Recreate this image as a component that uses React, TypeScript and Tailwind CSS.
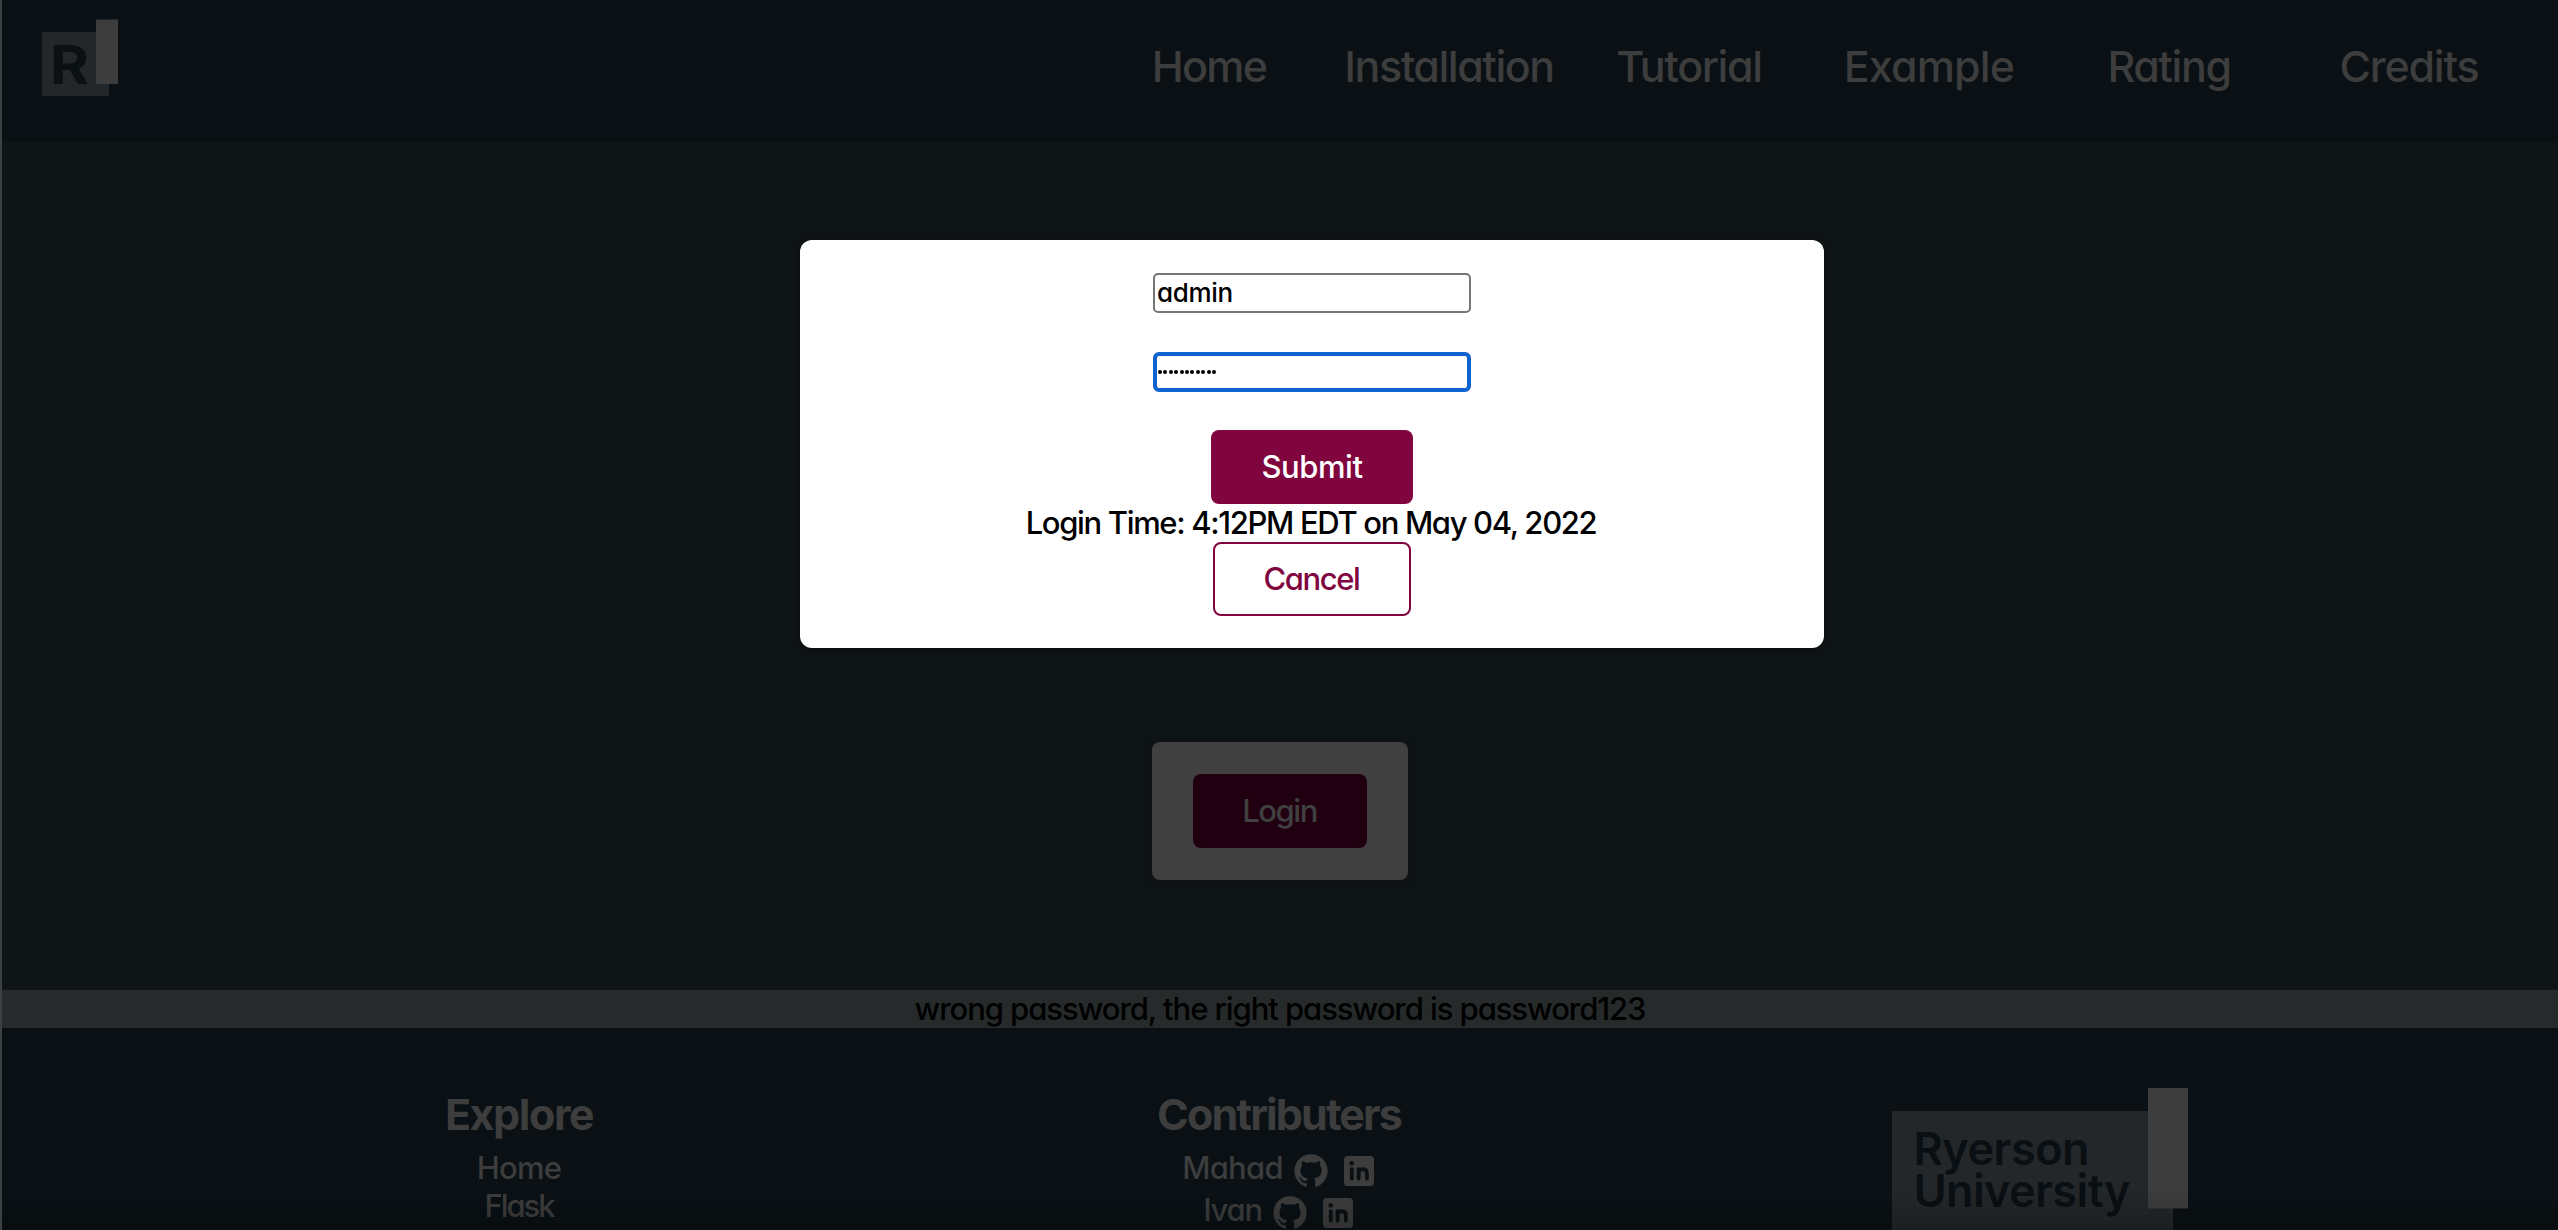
import { BiLogoGithub } from "react-icons/bi";

const navItems = [
  { label: "Home", tracking: "tracking-[-1.73px]" },
  { label: "Installation", tracking: "tracking-[-1.48px]" },
  { label: "Tutorial", tracking: "tracking-[-1.37px]" },
  { label: "Example", tracking: "tracking-[-0.86px]" },
  { label: "Rating", tracking: "tracking-[-1.44px]" },
  { label: "Credits", tracking: "tracking-[-1.21px]" },
];

const contributors = [
  { name: "Mahad", tracking: "tracking-[-0.75px]" },
  { name: "Ivan", tracking: "tracking-[-1.3px]" },
];

const passwordDots = Array.from({ length: 11 }, (_, i) => i);

function HeaderLogo() {
  return (
    <svg className="mt-[19px] ml-10 h-[78px] w-[76px]" viewBox="0 0 76 78">
      <rect x="0" y="13" width="67" height="64" fill="#23272a" />
      <rect x="54" y="0.5" width="22" height="64.5" fill="#3c3d3c" />
      <text
        x="8"
        y="64.5"
        fontSize="54"
        fontWeight="700"
        fill="#0a1014"
        textLength="39"
        lengthAdjust="spacingAndGlyphs"
      >
        R
      </text>
    </svg>
  );
}

function UniversityLogo() {
  return (
    <svg className="h-[150px] w-[296px]" viewBox="0 0 296 150">
      <rect x="0" y="23" width="281" height="127" fill="#23272a" />
      <rect x="256" y="0" width="40" height="120.5" fill="#3c3d3c" />
      <g fontSize="45" fontWeight="600" fill="#0a0f13">
        <text x="21.5" y="76.5" letterSpacing="-0.5">Ryerson</text>
        <text x="21.5" y="119" letterSpacing="-0.6">University</text>
      </g>
    </svg>
  );
}

function LinkedinIcon() {
  return (
    <svg className="mt-[7px] ml-[5px] size-[30px]" viewBox="0 0 30 30">
      <rect width="30" height="30" rx="3.5" fill="currentColor" />
      <circle cx="7.8" cy="7.2" r="2.3" fill="#0a1014" />
      <g fill="none" stroke="#0a1014" strokeWidth="3.8" strokeLinecap="round">
        <path d="M7.8 13.2V22.6" />
        <path d="M14.6 13.2V22.6" />
        <path d="M14.6 17.4C14.6 14.6 16.4 13.2 18.8 13.2C21.4 13.2 22.9 14.7 22.9 17.6V22.6" />
      </g>
    </svg>
  );
}

function Header() {
  return (
    <header className="flex h-[142px] justify-between bg-[#0a1014] pr-[29px]">
      <HeaderLogo />
      <nav className="mt-10 grid h-[52px] grid-cols-6 text-center text-[43px] leading-[52px] font-medium text-[#3c3d3c]">
        {navItems.map((item) => (
          <a key={item.label} className={`w-60 ${item.tracking}`}>
            {item.label}
          </a>
        ))}
      </nav>
    </header>
  );
}

function LoginModal() {
  return (
    <div className="absolute top-60 left-[800px] flex h-[408px] w-[1024px] flex-col items-center rounded-xl bg-white pt-[33px] shadow-[0_2px_8px_rgba(0,0,0,0.4)]">
      <div className="h-10 w-[318px] rounded-[5px] border-2 border-[#767676] pl-0.5 text-[26px] leading-[35px] font-medium tracking-[-0.32px] text-black">
        admin
      </div>
      <div className="mt-[39px] flex h-10 w-[318px] items-center gap-[1.42px] rounded-md border-4 border-[#1063cf] pl-px">
        {passwordDots.map((i) => (
          <span key={i} className="size-1 rounded-full bg-black" />
        ))}
      </div>
      <button className="mt-[38px] h-[74px] w-[202px] rounded-lg bg-[#80053f] text-[31px] leading-[38px] font-medium tracking-[-0.44px] text-white">
        Submit
      </button>
      <p className="pr-0.5 text-[31px] leading-[38px] font-medium tracking-[-1.34px] text-black">
        Login Time: 4:12PM EDT on May 04, 2022
      </p>
      <button className="h-[74px] w-[198px] rounded-lg border-2 border-[#80053f] pr-px text-[31px] leading-[38px] font-medium tracking-[-1.43px] text-[#80053f]">
        Cancel
      </button>
    </div>
  );
}

function Footer() {
  return (
    <footer className="grid h-[202px] grid-cols-[760px_760px_760px] justify-center bg-[#0a1014] pt-[60px] text-center text-[31px] leading-[38px] font-medium text-[#3c3d3c]">
      <div>
        <h2 className="pr-0.5 text-[43px] leading-[52px] font-bold tracking-[-1.44px]">Explore</h2>
        <p className="mt-[9px] pr-0.5 tracking-[-0.78px]">Home</p>
        <p className="pr-0.5 tracking-[-2.1px]">Flask</p>
      </div>
      <div>
        <h2 className="mb-[9px] pr-0.5 text-[43px] leading-[52px] font-bold tracking-[-1.9px]">
          Contributers
        </h2>
        {contributors.map((person) => (
          <div key={person.name} className="flex h-[42px] justify-center gap-2 pr-1">
            <span className={person.tracking}>{person.name}</span>
            <BiLogoGithub className="mt-0.5 size-10" />
            <LinkedinIcon />
          </div>
        ))}
      </div>
      <div className="flex justify-center">
        <UniversityLogo />
      </div>
    </footer>
  );
}

export default function App() {
  return (
    <div className="relative h-[1230px] w-full overflow-hidden bg-[#0f1417] pl-0.5 font-['Inter',sans-serif] [font-feature-settings:'cv11']">
      <Header />
      <main className="flex h-[848px] justify-center pt-[600px]">
        <div className="flex h-[138px] w-64 items-center justify-center rounded-lg bg-[#404040] shadow-[0_2px_12px_rgba(0,0,0,0.2)]">
          <button className="h-[74px] w-[174px] rounded-lg bg-[#200010] pr-px text-[31px] leading-[38px] font-medium tracking-[-1.44px] text-[#404040]">
            Login
          </button>
        </div>
      </main>
      <p className="h-[38px] bg-[#262a2b] text-center text-[31px] leading-[38px] font-medium tracking-[-1.06px] text-black">
        wrong password, the right password is password123
      </p>
      <Footer />
      <div className="absolute bottom-0 left-0 h-10 w-full bg-linear-to-t from-black/20 to-transparent" />
      <div className="absolute top-0 left-0 h-full w-0.5 bg-[#3c4144]" />
      <LoginModal />
    </div>
  );
}
